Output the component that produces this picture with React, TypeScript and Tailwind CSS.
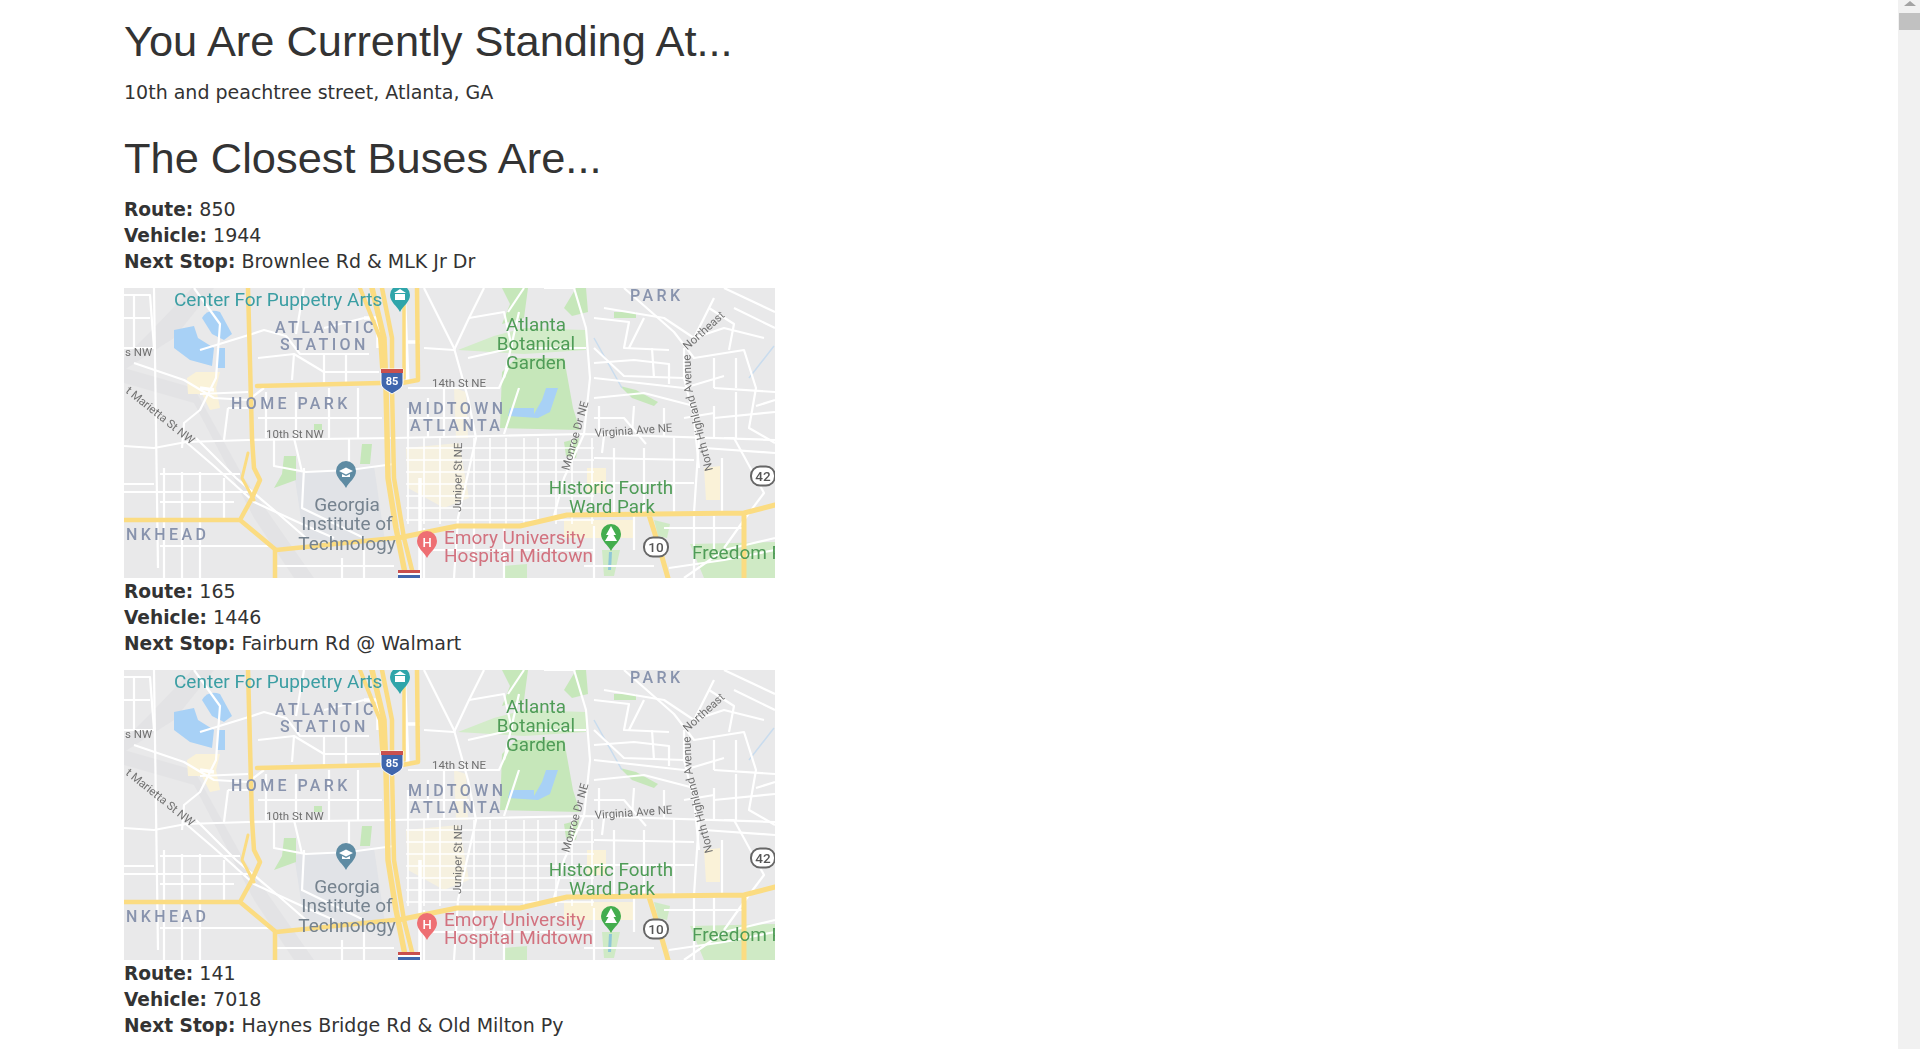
import React from "react";

const BUSES = [
  { route: "850", vehicle: "1944", stop: "Brownlee Rd & MLK Jr Dr", map: true },
  { route: "165", vehicle: "1446", stop: "Fairburn Rd @ Walmart", map: true },
  { route: "141", vehicle: "7018", stop: "Haynes Bridge Rd & Old Milton Py", map: false },
];

// thin white streets, each a polyline in map pixels
const STREETS = [
  "M0 7 L26 7 L30 60 L0 60", "M10 75 L60 92 L90 110 L124 112 L140 100", "M70 0 L96 36 L92 90 L76 122 L60 135 L58 160",
  "M76 62 L128 46 L140 42 L162 48 L176 66 L245 66", "M134 70 L170 66 L168 92", "M170 66 L200 84 L255 84", "M180 0 L172 46", "M200 66 L200 96", "M222 66 L222 96", "M240 30 L200 40",
  "M76 106 L124 104", "M30 0 L34 280", "M0 158 L30 160 L62 154 L124 152 L270 150 L460 146 L651 152",
  "M62 154 L90 178 L130 214 L178 236 L210 250", "M72 150 L112 190 L150 222 L182 250",
  "M0 196 L30 196 M0 204 L124 204", "M40 180 L40 290 M58 184 L58 290 M76 184 L76 290 M100 190 L100 232",
  "M36 186 L116 186 M36 214 L110 214 M36 258 L150 258", "M150 150 L150 178 L182 184 L225 182 L270 176", "M170 150 L178 184",
  "M225 150 L225 182", "M180 180 L178 220 L240 250", "M218 270 L218 290 M240 262 L240 290", "M150 278 L270 278",
  "M300 0 L330 60 L344 110 L352 150 L334 230 L330 290", "M300 60 L330 62 L345 30 L360 0", "M345 30 L380 24 L388 60 L344 70",
  "M284 100 L375 100 L384 80", "M395 24 L380 90", "M420 0 L450 0 L462 40 L466 90 L460 146 L440 190 L430 228", "M400 0 L384 24", "M405 60 L462 60",
  "M470 60 L500 88 L560 90 L570 130 L575 180", "M480 20 L540 30 L570 50 L600 40 L640 50", "M500 0 L550 44 L570 70 L620 62 L632 100 L625 140 L651 155",
  "M470 110 L520 105 L570 118 M470 130 L500 130 L522 156", "M505 60 L520 30 M528 60 L530 90 M560 60 L560 90 M590 10 L570 50 M600 0 L651 24 M610 20 L651 40", "M590 100 L651 104 M590 130 L651 124",
  "M470 90 L560 100 L600 88", "M560 130 L590 125 M575 150 L570 225",
  "M600 150 L610 150 L640 205 L625 225", "M625 225 L600 260 M651 250 L600 262 L560 290", "M540 240 L620 240 M570 225 L570 290", "M490 160 L490 225 M520 160 L520 225 M550 150 L550 225", "M470 170 L570 172 M470 195 L570 195",
  "M300 240 L300 290 M350 240 L350 290 M380 240 L380 290 M300 262 L470 262 M470 238 L470 290 M510 228 L510 262 M460 278 L530 278",
  "M590 228 L590 262 M545 280 L600 272 L651 262",
  "M470 30 L505 34 L500 60 L545 62 M470 75 L510 72 L545 76 L545 96 M475 118 L475 146 M510 118 L508 146 M540 120 L540 148",
  "M585 20 L610 36 L605 62 M590 70 L590 100 M612 70 L612 100 M590 118 L590 150 M612 104 L612 150 M632 118 L651 112",
  "M304 110 L304 150 M320 100 L320 150 M284 120 L284 150 M284 130 L345 130 M395 100 L380 146",
  "M0 30 L26 30 M10 7 L10 60 M104 120 L124 120 M104 120 L100 152 M142 104 L142 150 M172 104 L172 150 M205 100 L205 150 M234 100 L234 150 M134 130 L258 130",
  "M580 160 L651 165 M598 170 L598 225 M480 148 L478 165",
];

// regular downtown blocks
const GRID_V = [284, 300, 316, 350, 366, 382, 400, 414, 432, 448, 468];
const GRID_H = [160, 172, 184, 196, 208, 220, 232];

function Shield({ x, y, label }: { x: number; y: number; label: string }) {
  return (
    <g transform={`translate(${x} ${y})`}>
      <rect x="-12" y="-9.500" width="24" height="19" rx="9" fill="#fff" stroke="#666" strokeWidth="2" />
      <text x="0" y="5" textAnchor="middle" fontSize="13.500" fontWeight="500" fill="#555">{label}</text>
    </g>
  );
}

function Pin({ x, y, color }: { x: number; y: number; color: string }) {
  return (
    <path
      transform={`translate(${x} ${y})`}
      d="M0 16 C-3 10 -10 6 -10 -1 A10 10 0 1 1 10 -1 C10 6 3 10 0 16 Z"
      fill={color}
    />
  );
}

function BusMap() {
  const blue = "#8893ad";
  const green = "#4f9c57";
  return (
    <svg viewBox="0 0 651 290" className="block w-[651px] h-[290px] font-['Roboto',sans-serif]">
      <defs>
        <filter id="soft" x="0" y="0" width="1" height="1">
          <feGaussianBlur stdDeviation="0.6" />
        </filter>
      </defs>
      <g filter="url(#soft)">
        <rect width="651" height="290" fill="#e9e9ea" />
        {/* campus and lighter areas */}
        <path d="M170 185 L250 178 L262 260 L180 250 Z" fill="#e1e3e7" />
        <path d="M0 95 L70 115 L130 230 L170 290 L190 290 L120 190 L70 100 L0 80 Z" fill="#e3e3e5" />
        <path d="M68 0 L30 40 L0 70 L0 82 L50 50 L90 0 Z" fill="#e3e3e5" />

        {/* tan blocks */}
        <path d="M63 90 L72 84 L96 84 L92 100 L96 120 L86 122 L78 106 L64 106 Z" fill="#faf2d8" />
        <path d="M282 160 L335 155 L345 210 L320 220 L284 200 Z" fill="#f6f1e0" />
        <path d="M330 100 L342 104 L344 150 L332 150 Z" fill="#f6f1e0" />
        <path d="M463 180 L482 180 L482 205 L463 205 Z M580 180 L596 178 L596 212 L582 212 Z M440 232 L510 232 L510 250 L440 250 Z" fill="#faf2d8" />

        {/* parks */}
        <path d="M376 140 L378 84 L392 70 L440 70 L449 120 L456 142 Z" fill="#c6e7ba" />
        <path d="M334 62 L370 48 L400 40 L462 42 L462 62 L400 66 Z" fill="#d3ecc9" />
        <path d="M440 20 L452 0 L462 0 L464 24 L448 28 Z M378 0 L404 0 L400 30 L378 36 L386 16 Z" fill="#c6e7ba" />
        <path d="M490 24 L512 24 L512 30 L490 30 Z" fill="#c6e7ba" />
        <path d="M496 98 L512 102 L534 114 L530 118 L508 110 Z" fill="#c6e7ba" />
        <path d="M160 168 L172 168 L172 192 L150 200 L158 186 Z M238 156 L248 156 L246 176 L236 176 Z M190 136 L198 136 L198 142 L190 142 Z M440 154 L455 150 L452 170 L442 168 Z" fill="#c6e7ba" />
        <path d="M530 232 L546 236 L543 250 L534 248 Z M566 256 L651 254 L651 290 L580 290 Z M478 262 L496 262 L490 288 L480 288 Z M380 278 L403 276 L403 290 L380 290 Z" fill="#cfeac5" />

        {/* water */}
        <path d="M78 30 Q84 20 96 24 L108 46 L100 52 L88 46 Z" fill="#a8d1f6" />
        <path d="M50 42 L70 38 L74 50 L90 60 L88 78 L66 72 L50 60 Z" fill="#a8d1f6" />
        <path d="M93 60 L101 60 L101 80 L93 80 Z" fill="#a8d1f6" />
        <path d="M410 126 L418 112 L422 100 L434 100 L426 124 L414 130 L384 128 L386 120 L410 120 Z" fill="#a8d1f6" />
        <path d="M485 264 L488 264 L487 282 L484 282 Z" fill="#8fc6d8" />
        <path d="M470 50 L498 100 M625 90 L650 58" stroke="#c9dcee" strokeWidth="1.5" fill="none" />

        {/* streets */}
        <g stroke="#fff" strokeWidth="2.2" fill="none" strokeLinejoin="round">
          {STREETS.map((d, i) => (
            <path key={i} d={d} />
          ))}
          {GRID_V.map((x) => (
            <path key={x} d={`M${x} 150 L${x} 236`} strokeWidth="1.6" />
          ))}
          {GRID_H.map((y) => (
            <path key={y} d={`M282 ${y} L470 ${y}`} strokeWidth="1.6" />
          ))}
          <path d="M76 100 L90 102 M240 30 L254 30 L254 60 M280 0 L284 96 M296 54 L284 54 M296 190 L296 290" strokeWidth="3.5" />
        </g>

        {/* yellow roads */}
        <g stroke="#fbdc82" fill="none" strokeLinejoin="round" strokeLinecap="round">
          <path d="M124 0 L128 150 L130 180 L136 192 L128 210 L116 232 L0 232 M116 232 L152 262 L270 250" strokeWidth="4.500" />
          <path d="M124 165 L118 190 L130 212" strokeWidth="3" />
          <path d="M151 262 L151 290" strokeWidth="4.500" />
          <path d="M133 98 L257 95 M278 95 L294 92 L293 0" strokeWidth="4.500" />
          <path d="M280 0 L280 90" strokeWidth="3.500" />
          <path d="M274 250 L333 238 L396 238 L443 227 L620 225 L651 217 M620 225 L620 290 M525 227 L536 262 L544 290" strokeWidth="5" />
          <path d="M248 0 L260 50 L262 100 L264 190 L272 240 L282 290" strokeWidth="5.500" />
          <path d="M236 0 L256 50 L258 80" strokeWidth="4" />
          <path d="M258 0 L268 50 L268 100 L270 190 L280 250 L290 290" strokeWidth="4.500" />
        </g>

        <rect x="274" y="282" width="22" height="8" fill="#fff" />
        <rect x="274" y="282" width="22" height="3" fill="#c9504e" />
        <rect x="274" y="287" width="22" height="3" fill="#3f66ad" />
      </g>

      {/* labels */}
      <g style={{ filter: "blur(0.4px)" }}>
        <text x="50" y="18" fontSize="19" fill="#3b9ea3">Center For Puppetry Arts</text>
        <Pin x={276} y={8} color="#2fa5aa" />
        <path d="M270 5 L276 1 L282 5 Z M271 6 H281 V12 H271 Z" fill="#fff" />

        <g fontSize="16" fontWeight="500" fill={blue} letterSpacing="3.4">
          <text x="151" y="45">ATLANTIC</text>
          <text x="156" y="62">STATION</text>
          <text x="506" y="13">PARK</text>
          <text x="107" y="121">HOME PARK</text>
          <text x="284" y="126">MIDTOWN</text>
          <text x="286" y="143">ATLANTA</text>
          <text x="2" y="252">NKHEAD</text>
        </g>

        <g fontSize="18.800" fill={green} textAnchor="middle">
          <text x="412" y="43">Atlanta</text>
          <text x="412" y="62">Botanical</text>
          <text x="412" y="81">Garden</text>
          <text x="487" y="206">Historic Fourth</text>
          <text x="488" y="225">Ward Park</text>
        </g>
        <text x="568" y="271" fontSize="19" fill={green}>Freedom P</text>

        <g fontSize="19" fill="#76838f" textAnchor="middle">
          <text x="223" y="223">Georgia</text>
          <text x="223" y="242">Institute of</text>
          <text x="223" y="262">Technology</text>
        </g>
        <g fontSize="19" fill="#d2727f">
          <text x="320" y="256">Emory University</text>
          <text x="320" y="274">Hospital Midtown</text>
        </g>

        <g fontSize="11.500" fill="#707070">
          <text x="308" y="99">14th St NE</text>
          <text x="142" y="150">10th St NW</text>
          <text x="1" y="68">s NW</text>
          <text transform="translate(471 149) rotate(-4)">Virginia Ave NE</text>
          <text transform="translate(445 183) rotate(-74)">Monroe Dr NE</text>
          <text transform="translate(337 224) rotate(-89)">Juniper St NE</text>
          <text transform="translate(1 104) rotate(38.800)">t Marietta St NW</text>
          <path id="highland" d="M589 182 L568 100 L566 60 L606 24" fill="none" />
          <text>
            <textPath href="#highland">North Highland Avenue Northeast</textPath>
          </text>
        </g>

        <Pin x={222} y={184} color="#5e8ba3" />
        <path d="M215 183 L222 179.500 L229 183 L222 186.500 Z M218 186 L222 188 L226 186 V189 H218 Z" fill="#fff" />
        <Pin x={303} y={254} color="#ee6f73" />
        <text x="303" y="259" textAnchor="middle" fontSize="13" fontWeight="500" fill="#fff">H</text>
        <Pin x={487} y={247} color="#43ad4e" />
        <path d="M487 238 L492 247 L489.500 247 L493 253 L481 253 L484.500 247 L482 247 Z" fill="#fff" />

        <Shield x={639} y={188} label="42" />
        <Shield x={532} y={259} label="10" />
        <g transform="translate(268 93)">
          <path d="M-11 -12 H11 V2 C11 8 4 10 0 13 C-4 10 -11 8 -11 2 Z" fill="#3f66ad" stroke="#fff" />
          <rect x="-11" y="-12" width="22" height="4" fill="#c9504e" />
          <text x="0" y="4" textAnchor="middle" fontSize="11" fontWeight="700" fill="#fff">85</text>
        </g>
      </g>
    </svg>
  );
}

function BusRow({ route, vehicle, stop }: { route: string; vehicle: string; stop: string }) {
  return (
    <>
      <div className="h-[26px]"><b className="text-[18.6px] leading-none">Route:</b> {route}</div>
      <div className="h-[26px]"><b className="text-[18.6px] leading-none">Vehicle:</b> {vehicle}</div>
      <div className="h-[26px]"><b className="text-[18.6px] leading-none">Next Stop:</b> {stop}</div>
    </>
  );
}

export default function App() {
  return (
    <div className="relative h-[1049px] overflow-hidden bg-white pl-[124px] pr-[22px] text-[19px] leading-[26px] text-[#333] font-['DejaVu_Sans',sans-serif]">
      <h1 className="mt-[18px] mb-[15px] text-[43.4px] leading-[46px] font-normal font-['Liberation_Sans',sans-serif]">
        You Are Currently Standing At...
      </h1>
      <p className="mb-[30px]">10th and peachtree street, Atlanta, GA</p>
      <h2 className="mb-[15px] text-[43.4px] leading-[46px] font-normal font-['Liberation_Sans',sans-serif]">
        The Closest Buses Are...
      </h2>

      {BUSES.map((b) => (
        <div key={b.route}>
          <BusRow route={b.route} vehicle={b.vehicle} stop={b.stop} />
          {b.map && (
            <div className="mt-[14px]">
              <BusMap />
            </div>
          )}
        </div>
      ))}

      {/* scrollbar */}
      <div className="absolute top-0 right-0 h-full w-[22px] bg-[#f1f1f1] pl-[1px]">
        <div className="mx-auto mt-[1px] h-0 w-0 border-x-[6px] border-b-[5px] border-x-transparent border-b-[#a3a3a3]" />
        <div className="mt-[7px] h-[17px] bg-[#c1c1c1]" />
      </div>
    </div>
  );
}
